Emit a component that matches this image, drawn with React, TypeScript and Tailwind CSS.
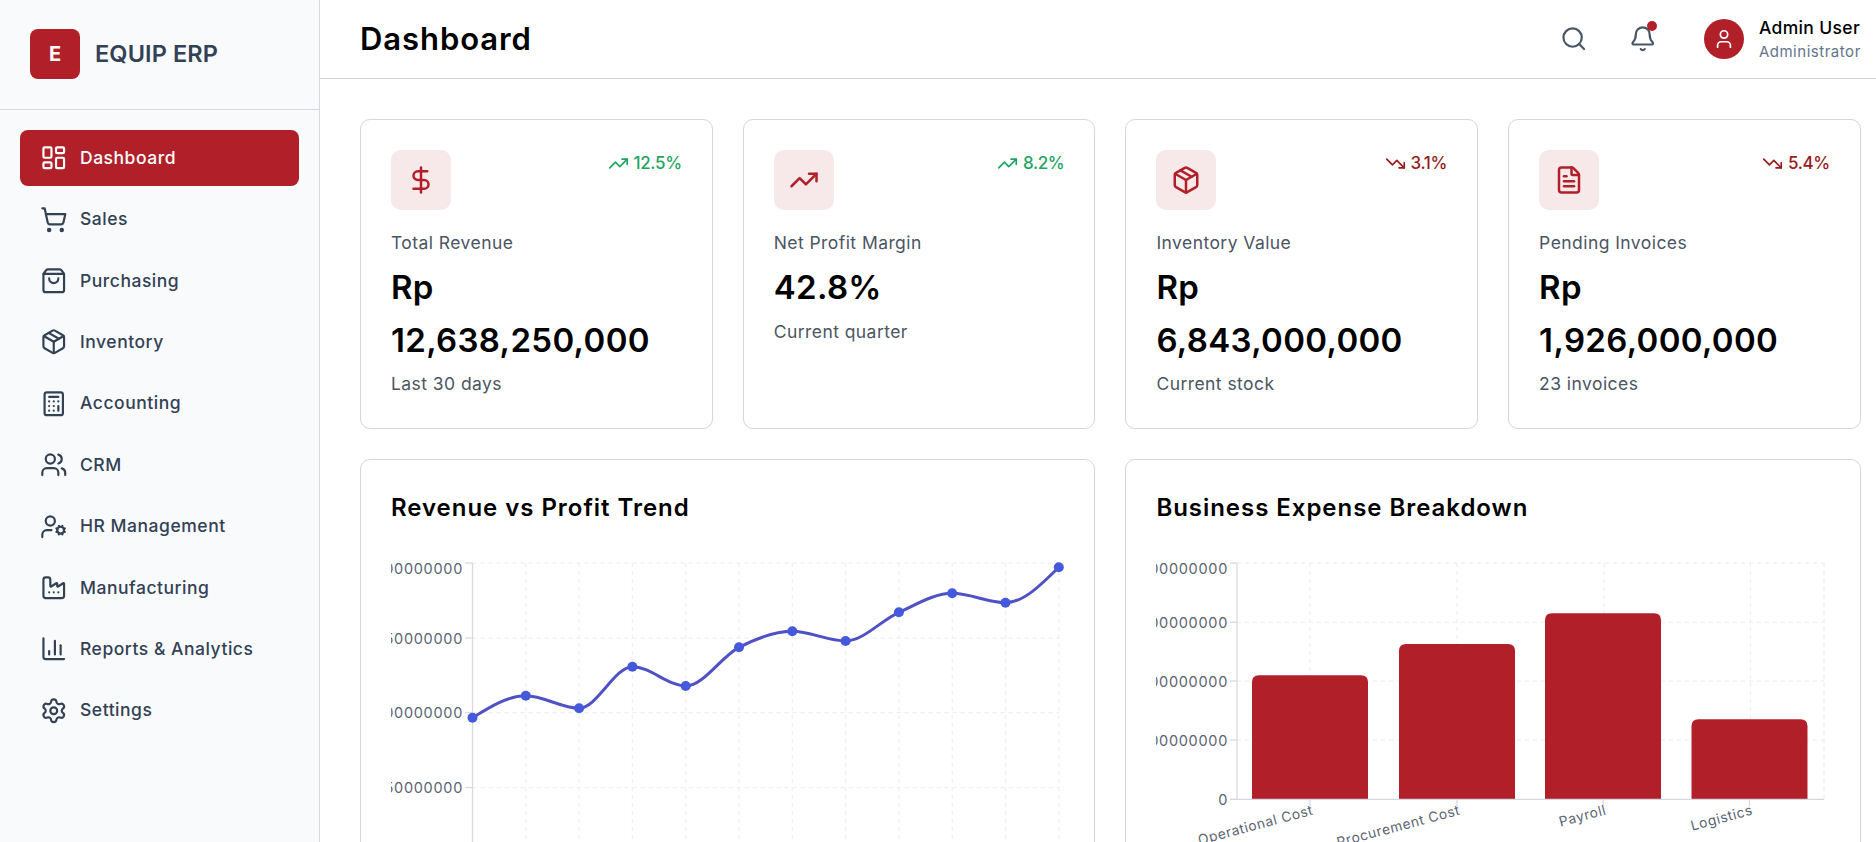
import {
  Bell,
  Calculator,
  ChartColumn,
  DollarSign,
  Factory,
  FileText,
  LayoutDashboard,
  Package,
  Search,
  Settings,
  ShoppingBag,
  ShoppingCart,
  TrendingDown,
  TrendingUp,
  User,
  UserCog,
  Users,
  type LucideIcon,
} from 'lucide-react';

const navItems: { icon: LucideIcon; label: string }[] = [
  { icon: LayoutDashboard, label: 'Dashboard' },
  { icon: ShoppingCart, label: 'Sales' },
  { icon: ShoppingBag, label: 'Purchasing' },
  { icon: Package, label: 'Inventory' },
  { icon: Calculator, label: 'Accounting' },
  { icon: Users, label: 'CRM' },
  { icon: UserCog, label: 'HR Management' },
  { icon: Factory, label: 'Manufacturing' },
  { icon: ChartColumn, label: 'Reports & Analytics' },
  { icon: Settings, label: 'Settings' },
];

const stats = [
  { icon: DollarSign, label: 'Total Revenue', value: 'Rp 12,638,250,000', note: 'Last 30 days', trend: '12.5%', up: true },
  { icon: TrendingUp, label: 'Net Profit Margin', value: '42.8%', note: 'Current quarter', trend: '8.2%', up: true },
  { icon: Package, label: 'Inventory Value', value: 'Rp 6,843,000,000', note: 'Current stock', trend: '3.1%', up: false },
  { icon: FileText, label: 'Pending Invoices', value: 'Rp 1,926,000,000', note: '23 invoices', trend: '5.4%', up: false },
];

// chart coordinates are relative to the svg, which starts 31px into the card
const lineTop = 8;
const linePoints = [162.7, 140.7, 153.3, 111.7, 131, 92.3, 76.3, 86, 57.3, 38.3, 47.7, 12.3].map((y, i) => ({
  x: 81.5 + i * 53.3,
  y,
}));

// same maths as d3's curveMonotoneX
const monotonePath = (points: { x: number; y: number }[]) => {
  const n = points.length;
  const slopes = points.map((p, i) => {
    if (i === 0 || i === n - 1) return 0;
    const h0 = p.x - points[i - 1].x;
    const h1 = points[i + 1].x - p.x;
    const s0 = (p.y - points[i - 1].y) / h0;
    const s1 = (points[i + 1].y - p.y) / h1;
    const mid = (s0 * h1 + s1 * h0) / (h0 + h1);
    return (Math.sign(s0) + Math.sign(s1)) * Math.min(Math.abs(s0), Math.abs(s1), 0.5 * Math.abs(mid));
  });
  slopes[0] = (3 * (points[1].y - points[0].y) / (points[1].x - points[0].x) - slopes[1]) / 2;
  slopes[n - 1] = (3 * (points[n - 1].y - points[n - 2].y) / (points[n - 1].x - points[n - 2].x) - slopes[n - 2]) / 2;
  let d = `M${points[0].x},${points[0].y}`;
  for (let i = 1; i < n; i++) {
    const dx = (points[i].x - points[i - 1].x) / 3;
    d += `C${points[i - 1].x + dx},${points[i - 1].y + dx * slopes[i - 1]} ${points[i].x - dx},${points[i].y - dx * slopes[i]} ${points[i].x},${points[i].y}`;
  }
  return d;
};

const RevenueChart = () => (
  <svg className="mt-[29px] block" height={320} width={674}>
    {[0, 75, 149.5, 224.5, 299.5].map((offset) => (
      <line key={offset} stroke="#eef0f3" strokeDasharray="4 4" strokeWidth={1.25} x1={81.5} x2={668} y1={lineTop + offset} y2={lineTop + offset} />
    ))}
    {linePoints.slice(1).map((p) => (
      <line key={p.x} stroke="#eef0f3" strokeDasharray="4 4" strokeWidth={1.25} x1={p.x} x2={p.x} y1={lineTop} y2={320} />
    ))}
    <line stroke="#d5d8e0" strokeWidth={1.25} x1={81.5} x2={81.5} y1={lineTop} y2={320} />
    {[
      { label: '1200000000', y: lineTop, ty: 13 },
      { label: '1150000000', y: lineTop + 75, ty: lineTop + 75 },
      { label: '1100000000', y: lineTop + 149.5, ty: lineTop + 149.5 },
      { label: '1050000000', y: lineTop + 224.5, ty: lineTop + 224.5 },
    ].map((tick) => (
      <g key={tick.label}>
        <line stroke="#d5d8e0" strokeWidth={1.25} x1={74} x2={81.5} y1={tick.y} y2={tick.y} />
        <text dominantBaseline="central" fill="#5b6472" fontSize={14.5} letterSpacing={0.7} textAnchor="end" x={72} y={tick.ty}>
          {tick.label}
        </text>
      </g>
    ))}
    <path d={monotonePath(linePoints)} fill="none" stroke="#4f52c4" strokeWidth={3} />
    {linePoints.map((p) => (
      <circle cx={p.x} cy={p.y} fill="#4559dc" key={p.x} r={5} />
    ))}
  </svg>
);

const barBase = 244.3;
const bars = [
  { label: 'Operational Cost', x: 96, top: 120.3 },
  { label: 'Procurement Cost', x: 243, top: 89 },
  { label: 'Payroll', x: 389, top: 58.3 },
  { label: 'Logistics', x: 535.5, top: 164.3 },
];

const ExpenseChart = () => (
  <svg className="mt-[29px] block" height={320} width={674}>
    {[8, 67.3, 126, 185].map((y) => (
      <line key={y} stroke="#eef0f3" strokeDasharray="4 4" strokeWidth={1.25} x1={81} x2={668} y1={y} y2={y} />
    ))}
    {[154, 301, 448, 594.5, 668].map((x) => (
      <line key={x} stroke="#eef0f3" strokeDasharray="4 4" strokeWidth={1.25} x1={x} x2={x} y1={8} y2={barBase} />
    ))}
    {bars.map((bar) => (
      <path
        d={`M${bar.x},${barBase}V${bar.top + 7}q0,-7 7,-7H${bar.x + 109}q7,0 7,7V${barBase}Z`}
        fill="#b11f28"
        key={bar.label}
      />
    ))}
    <line stroke="#d5d8e0" strokeWidth={1.25} x1={81} x2={81} y1={8} y2={barBase} />
    <line stroke="#d5d8e0" strokeWidth={1.25} x1={74} x2={668} y1={barBase} y2={barBase} />
    {[
      { label: '4000000000', y: 8, ty: 13 },
      { label: '3000000000', y: 67.3, ty: 67.3 },
      { label: '2000000000', y: 126, ty: 126 },
      { label: '1000000000', y: 185, ty: 185 },
      { label: '0', y: barBase, ty: barBase },
    ].map((tick) => (
      <g key={tick.label}>
        <line stroke="#d5d8e0" strokeWidth={1.25} x1={74} x2={81} y1={tick.y} y2={tick.y} />
        <text dominantBaseline="central" fill="#5b6472" fontSize={14.5} letterSpacing={0.7} textAnchor="end" x={72} y={tick.ty}>
          {tick.label}
        </text>
      </g>
    ))}
    {bars.map((bar) => {
      const cx = bar.x + 58;
      return (
        <g key={bar.label}>
          <line stroke="#d5d8e0" strokeWidth={1.25} x1={cx} x2={cx} y1={barBase} y2={barBase + 7} />
          <text
            fill="#5b6472"
            fontSize={13.75}
            letterSpacing={0.6}
            textAnchor="end"
            transform={`rotate(-15 ${cx + 4} ${barBase + 15})`}
            x={cx + 4}
            y={barBase + 15}
          >
            {bar.label}
          </text>
        </g>
      );
    })}
  </svg>
);

export default function App() {
  return (
    <div className="flex h-screen overflow-hidden bg-white font-['Inter',sans-serif] text-black">
      <aside className="flex h-full w-[320px] shrink-0 flex-col border-r border-[#d3d8e4] bg-[#f8fafc]">
        <div className="flex h-[110px] shrink-0 items-center gap-[15px] border-b border-[#d3d8e4] pb-[2px] pl-[30px]">
          <div className="flex h-[50px] w-[50px] items-center justify-center rounded-lg bg-[#b11f28] text-[20px] font-bold text-white">
            E
          </div>
          <span className="text-[23.5px] font-semibold tracking-[0.005em] text-[#334155]">EQUIP ERP</span>
        </div>
        <nav className="flex flex-col gap-[5.4px] px-5 pt-5">
          {navItems.map(({ icon: Icon, label }, index) => (
            <div
              className={`flex h-14 items-center gap-[12.5px] rounded-lg px-5 text-[17.5px] tracking-[0.03em] ${
                index === 0 ? 'bg-[#b11f28] font-medium text-white' : 'font-medium text-[#334155]'
              }`}
              key={label}
            >
              <Icon className="shrink-0" size={27.5} strokeWidth={1.9} />
              {label}
            </div>
          ))}
        </nav>
      </aside>

      <main className="min-w-0 flex-1">
        <header className="flex h-[79px] items-center justify-between border-b border-[#d4d6dc] pl-10 pr-[15.2px]">
          <h1 className="text-[31px] font-semibold tracking-[0.03em]">Dashboard</h1>
          <div className="flex items-center">
            <Search className="text-[#475569]" size={27.5} strokeWidth={1.9} />
            <div className="relative ml-[42px]">
              <Bell className="text-[#475569]" size={27.5} strokeWidth={1.9} />
              <span className="absolute right-0 top-[-4px] h-2.5 w-2.5 rounded-full bg-[#b11f28]" />
            </div>
            <div className="ml-[47px] flex h-10 w-10 items-center justify-center rounded-full bg-[#b11f28] text-white">
              <User size={22} strokeWidth={1.9} />
            </div>
            <div className="ml-[15px]">
              <div className="text-[17.5px] font-medium leading-[26px] tracking-[0.02em]">Admin User</div>
              <div className="text-[15px] leading-[22px] tracking-[0.035em] text-[#64748b]">Administrator</div>
            </div>
          </div>
        </header>

        <div className="pl-10 pr-[15.2px] pt-10">
          <section className="grid grid-cols-4 gap-[30px]">
            {stats.map(({ icon: Icon, label, value, note, trend, up }) => (
              <article className="rounded-[10px] border border-[#d3d6df] p-[30px] pb-[29px]" key={label}>
                <div className="flex items-start justify-between">
                  <div className="flex h-[60px] w-[60px] items-center justify-center rounded-[10px] bg-[#f7e8e9] text-[#b11f28]">
                    <Icon size={30} strokeWidth={2} />
                  </div>
                  <div className={`flex items-center gap-[5px] text-[17px] font-medium leading-[26px] tracking-[-0.02em] ${up ? 'text-[#1fa463]' : 'text-[#991b1b]'}`}>
                    {up ? <TrendingUp size={21} strokeWidth={1.9} /> : <TrendingDown size={21} strokeWidth={1.9} />}
                    {trend}
                  </div>
                </div>
                <p className="mt-[18px] text-[17.5px] leading-[30px] tracking-[0.025em] text-[#4b5563]">{label}</p>
                <p className="mt-[3px] text-[33px] font-semibold leading-[52.5px] tracking-[0.01em]">
                  {value.split(' ').map((part) => (
                    <span className="block" key={part}>
                      {part}
                    </span>
                  ))}
                </p>
                <p className="mt-[3px] text-[17.5px] leading-[30px] tracking-[0.025em] text-[#4b5563]">{note}</p>
              </article>
            ))}
          </section>

          <section className="mt-[30px] grid grid-cols-2 gap-[30px]">
            <article className="h-[500px] rounded-[10px] border border-[#d3d6df] px-[30px] pt-[30px]">
              <h2 className="text-[24px] font-semibold leading-9 tracking-[0.04em]">Revenue vs Profit Trend</h2>
              <RevenueChart />
            </article>
            <article className="h-[500px] rounded-[10px] border border-[#d3d6df] px-[30px] pt-[30px]">
              <h2 className="text-[24px] font-semibold leading-9 tracking-[0.04em]">Business Expense Breakdown</h2>
              <ExpenseChart />
            </article>
          </section>
        </div>
      </main>
    </div>
  );
}
